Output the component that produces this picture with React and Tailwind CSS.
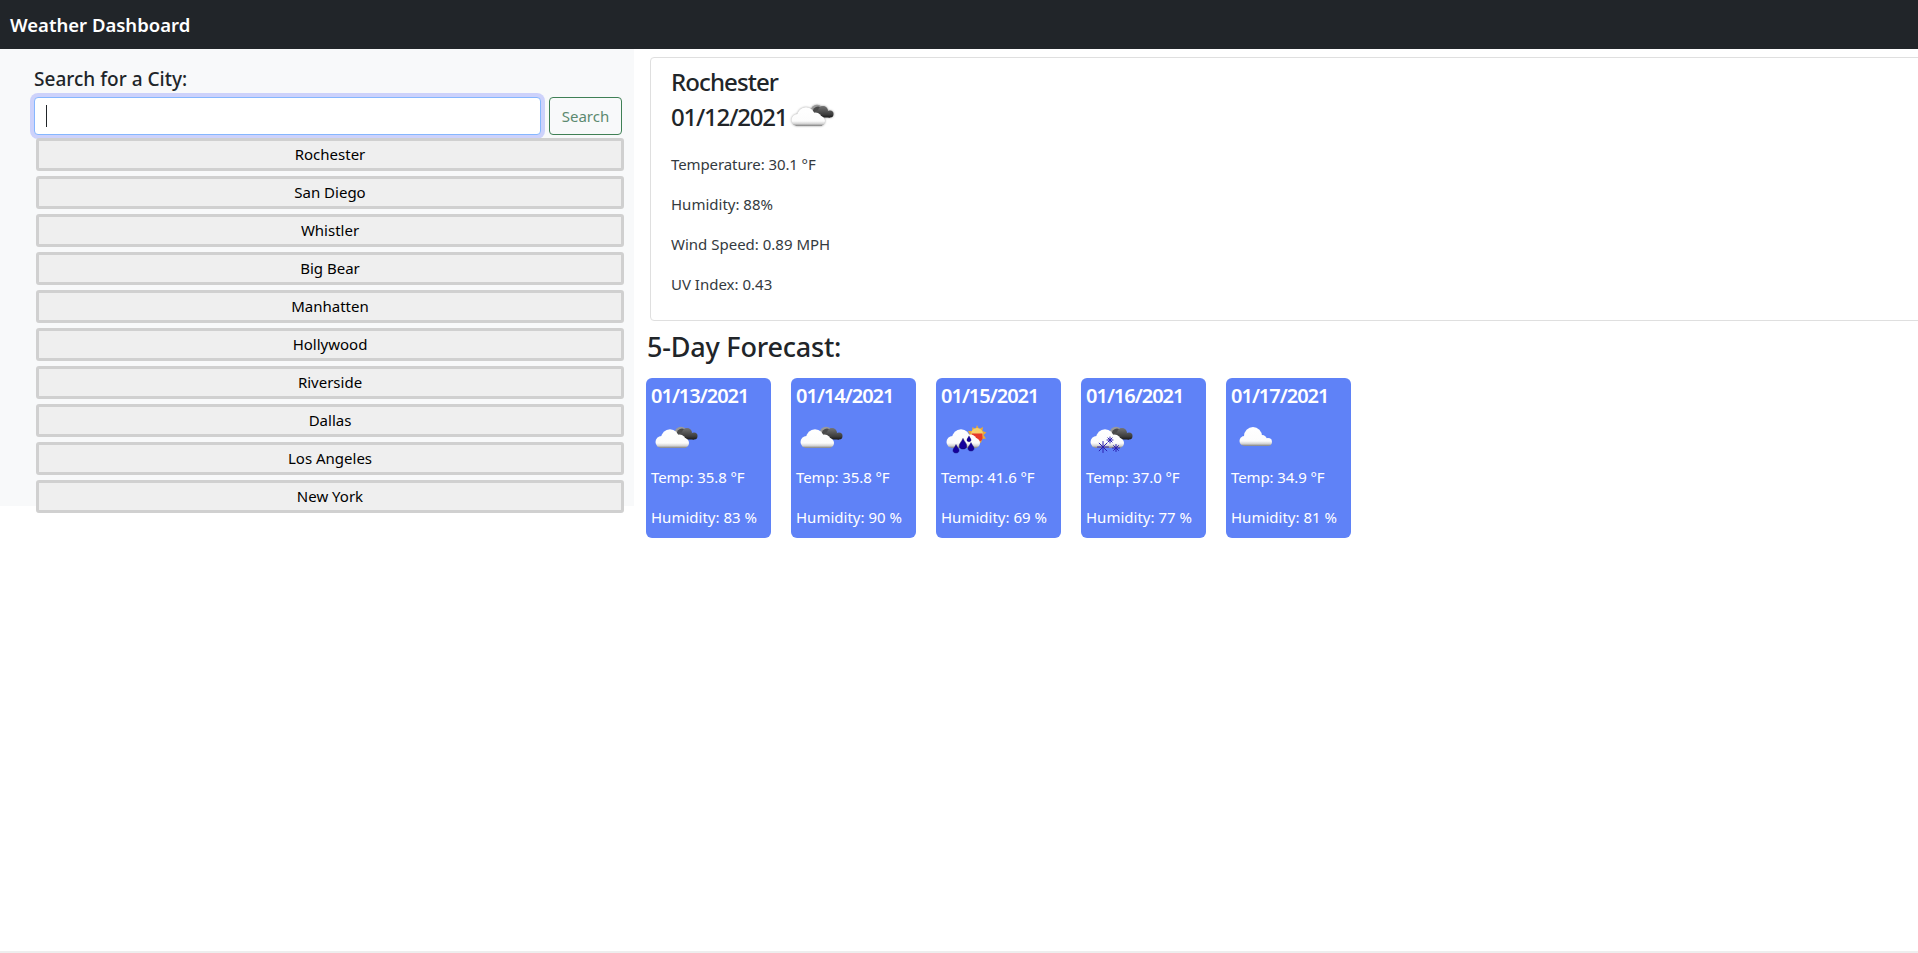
const cities = ["Rochester","San Diego","Whistler","Big Bear","Manhatten","Hollywood","Riverside","Dallas","Los Angeles","New York"];
const days = [
  { date:"01/13/2021", temp:"35.8", hum:"83", icon:"cloudy" },
  { date:"01/14/2021", temp:"35.8", hum:"90", icon:"cloudy" },
  { date:"01/15/2021", temp:"41.6", hum:"69", icon:"rain" },
  { date:"01/16/2021", temp:"37.0", hum:"77", icon:"snow" },
  { date:"01/17/2021", temp:"34.9", hum:"81", icon:"cloud" },
];

function Grads({ id, top = 15, bottom = 34 }) {
  return (
    <defs>
      <linearGradient id={`w${id}`} gradientUnits="userSpaceOnUse" x1="0" y1={top} x2="0" y2={bottom}>
        <stop offset="0" stopColor="#ffffff" />
        <stop offset="0.74" stopColor="#fcfcfc" />
        <stop offset="0.88" stopColor="#d4d4d4" />
        <stop offset="1" stopColor="#808080" />
      </linearGradient>
      <linearGradient id={`d${id}`} gradientUnits="userSpaceOnUse" x1="0" y1="14" x2="0" y2="26">
        <stop offset="0" stopColor="#747474" />
        <stop offset="0.7" stopColor="#3c3c3c" />
        <stop offset="1" stopColor="#141414" />
      </linearGradient>
    </defs>
  );
}

function WhiteCloud({ id }) {
  return (
    <g fill={`url(#w${id})`}>
      <rect x="9" y="25" width="26" height="9" />
      <circle cx="10.5" cy="28" r="6" />
      <circle cx="19" cy="24" r="8.8" />
      <circle cx="28.5" cy="27" r="6.5" />
      <circle cx="33" cy="29" r="5" />
    </g>
  );
}

function DarkCloud({ id }) {
  return (
    <g>
      <circle cx="30" cy="19" r="6.2" fill="#9a9a9a" />
      <circle cx="31" cy="20" r="5.4" fill="#4a4a4a" />
      <g fill={`url(#d${id})`}>
        <circle cx="36" cy="19" r="5" />
        <circle cx="43" cy="22" r="3.5" />
        <rect x="30" y="20" width="13" height="5.5" />
        <circle cx="31" cy="22" r="3.5" />
      </g>
    </g>
  );
}

function Drop({ x, y, s = 1 }) {
  return <path transform={`translate(${x} ${y}) scale(${s})`} d="M0 -4.5 C1 -2 3 -0.5 3 1.5 C3 3.2 1.6 4 0 4 C-1.6 4 -3 3.2 -3 1.5 C-3 -0.5 -1 -2 0 -4.5 Z" fill="#15009c" stroke="#0a0060" strokeWidth="0.4" />;
}

function Flake({ x, y, r }) {
  return (
    <g stroke="#2b1fb0" strokeWidth="1" strokeLinecap="round">
      <path d={`M${x - r} ${y} H${x + r} M${x} ${y - r} V${y + r} M${x - r * 0.7} ${y - r * 0.7} L${x + r * 0.7} ${y + r * 0.7} M${x - r * 0.7} ${y + r * 0.7} L${x + r * 0.7} ${y - r * 0.7}`} />
    </g>
  );
}

function WeatherIcon({ type, id, className }) {
  return (
    <svg viewBox="0 0 50 50" className={className}>
      <Grads id={id} top={type === "cloud" ? 13 : 15} bottom={type === "cloud" ? 32 : 34} />
      {type === "cloudy" && (
        <>
          <DarkCloud id={id} />
          <WhiteCloud id={id} />
        </>
      )}
      {type === "cloud" && (
        <g fill={`url(#w${id})`}>
          <rect x="13" y="26" width="25" height="6" />
          <circle cx="13.5" cy="27" r="5" />
          <circle cx="22" cy="22" r="9" />
          <circle cx="31" cy="26" r="5" />
          <circle cx="37" cy="28" r="4" />
        </g>
      )}
      {type === "rain" && (
        <>
          <path d="M36 11 L38 15 L42 13 L41.5 17 L45.5 18.5 L42.5 21 L45 24.5 L41 25 L40 29 L30 24 L27 17 L31 17 L31.5 13 L34.5 15 Z" fill="#e8a93a" />
          <circle cx="36" cy="20" r="6" fill="#f7d06a" />
          <path d="M30.5 19.5 H41.5 V24 C41.5 26.5 39 27.5 37 27.5 H33 Z" fill="#e6392a" />
          <g transform="translate(1 0)"><WhiteCloud id={id} /></g>
          <Drop x={22} y={30} s={1.25} />
          <Drop x={30} y={33} s={1} />
          <Drop x={15} y={35} s={1} />
          <Drop x={28} y={25} s={0.7} />
        </>
      )}
      {type === "snow" && (
        <>
          <DarkCloud id={id} />
          <WhiteCloud id={id} />
          <Flake x={17} y={33} r={5.5} />
          <Flake x={24} y={26} r={3} />
          <Flake x={30} y={34} r={3.5} />
        </>
      )}
    </svg>
  );
}

function Card({ d, i }) {
  return (
    <div className="w-[125px] h-[160px] shrink-0 rounded-[6px] bg-[#5f82f7] text-white pl-[5px]">
      <div className="mt-[6px] text-[20px] leading-[24px] font-semibold tracking-[-1px]">{d.date}</div>
      <WeatherIcon type={d.icon} id={`c${i}`} className="w-[50px] h-[50px] mt-[6px]" />
      <p className="mt-[1px] text-[15px] leading-[24px] tracking-[-0.1px]">Temp: {d.temp} °F</p>
      <p className="mt-[16px] text-[15px] leading-[24px]">Humidity: {d.hum} %</p>
    </div>
  );
}

export default function App() {
  return (
    <div className="relative w-[1918px] h-[953px] overflow-hidden bg-white text-[#212529] font-['Noto_Sans','Open_Sans',sans-serif]">
      <nav className="h-[49px] bg-[#212529] flex items-center pl-[10px]">
        <span className="text-[18.5px] font-semibold text-white">Weather Dashboard</span>
      </nav>
      <div className="flex">
        <aside className="w-[634px] h-[457px] shrink-0 bg-[#f8f9fa] pl-[34px]">
          <div className="mt-[18px] h-[24px] leading-[24px] text-[19px] font-medium tracking-[0.02px]">Search for a City:</div>
          <div className="flex mt-[6px] gap-[8px]">
            <div className="w-[507px] h-[38px] rounded-[4px] bg-white border border-[#86b7fe] ring-4 ring-[#cdd2fb] flex items-center pl-[11px]">
              <div className="w-px h-[22px] bg-[#212529]" />
            </div>
            <button className="w-[73px] h-[38px] rounded-[4px] border border-[#3f8055] text-[#5c8a70] text-[15px]">Search</button>
          </div>
          <div className="mt-[3px] ml-[2px] w-[588px] flex flex-col gap-[5px]">
            {cities.map((c) => (
              <button key={c} className="h-[33px] shrink-0 bg-[#efefef] border-[3px] border-[#d0d0d0] rounded-[3px] pb-[2px] text-[15px] leading-[24px] text-black">{c}</button>
            ))}
          </div>
        </aside>
        <main className="flex-1 pl-[12px] min-w-0">
          <section className="mt-[8px] ml-[4px] w-[1400px] h-[264px] rounded-[4px] border border-[#dfdfdf] pl-[20px] pt-[9px]">
            <div className="h-[30px] leading-[30px] text-[24px] font-medium tracking-[-0.9px]">Rochester</div>
            <div className="flex items-center h-[36px] mt-[2px]">
              <span className="text-[24px] font-medium tracking-[-1.2px]">01/12/2021</span>
              <WeatherIcon type="cloudy" id="main" className="w-[50px] h-[50px] shrink-0 drop-shadow-[0_0_1px_rgba(0,0,0,0.4)]" />
            </div>
            <p className="mt-[17px] text-[15px] leading-[24px] tracking-[-0.1px] text-[#343a40]">Temperature: 30.1 °F</p>
            <p className="mt-[16px] text-[15px] leading-[24px] text-[#343a40]">Humidity: 88%</p>
            <p className="mt-[16px] text-[15px] leading-[24px] text-[#343a40]">Wind Speed: 0.89 MPH</p>
            <p className="mt-[16px] text-[15px] leading-[24px] text-[#343a40]">UV Index: 0.43</p>
          </section>
          <h2 className="mt-[9px] ml-[1px] h-[34px] leading-[34px] text-[27px] font-medium tracking-[-0.2px]">5-Day Forecast:</h2>
          <div className="flex gap-[20px] mt-[14px]">
            {days.map((d, i) => <Card key={d.date} d={d} i={i} />)}
          </div>
        </main>
      </div>
      <div className="absolute bottom-0 left-0 right-0 h-[2px] bg-[#eeeeee]" />
    </div>
  );
}
